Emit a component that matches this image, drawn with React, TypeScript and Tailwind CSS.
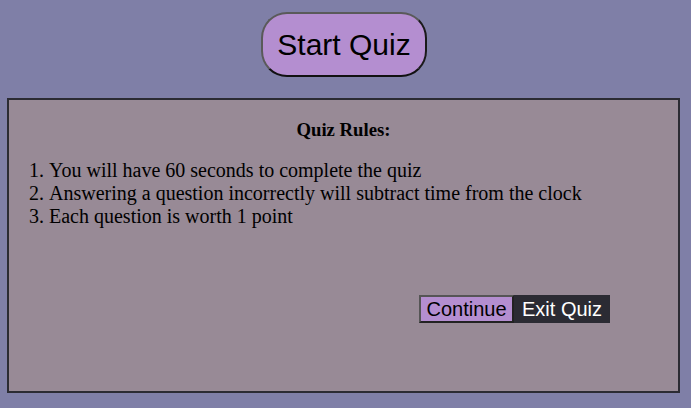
export default function App() {
  return (
    <div className="min-h-[408px] w-full bg-[#7f7fa7] pt-[12px] font-['Liberation_Serif',serif] text-black">
      <div className="flex justify-center">
        <button className="ml-[-3px] h-[65px] w-[166px] rounded-[26px] border-2 border-t-[#5a5a5a] border-l-[#5a5a5a] border-r-[#1a1a1a] border-b-[#111] bg-[#b48ed0] font-['Liberation_Sans',sans-serif] text-[30px] leading-none">
          Start Quiz
        </button>
      </div>

      <div className="ml-[7px] mt-[21px] flex h-[295px] w-[673px] flex-col border-2 border-[#2b2b33] bg-[#988a96]">
        <h3 className="mt-[19px] text-center text-[18.72px] font-bold leading-[22px]">
          Quiz Rules:
        </h3>
        <ol className="mt-[18px] list-decimal pl-[40px] text-[20px] leading-[23px]">
          <li>You will have 60 seconds to complete the quiz</li>
          <li>Answering a question incorrectly will subtract time from the clock</li>
          <li>Each question is worth 1 point</li>
        </ol>
        <div className="mt-[67px] flex pl-[410px] font-['Liberation_Sans',sans-serif] text-[20px] leading-none">
          <button className="h-[28px] w-[95px] border-2 border-t-[#555] border-l-[#555] border-r-[#222] border-b-[#222] bg-[#b48ed0]">
            Continue
          </button>
          <button className="h-[28px] w-[96px] border-2 border-[#2b2b33] bg-[#2b2b33] text-white">
            Exit Quiz
          </button>
        </div>
      </div>
    </div>
  );
}
